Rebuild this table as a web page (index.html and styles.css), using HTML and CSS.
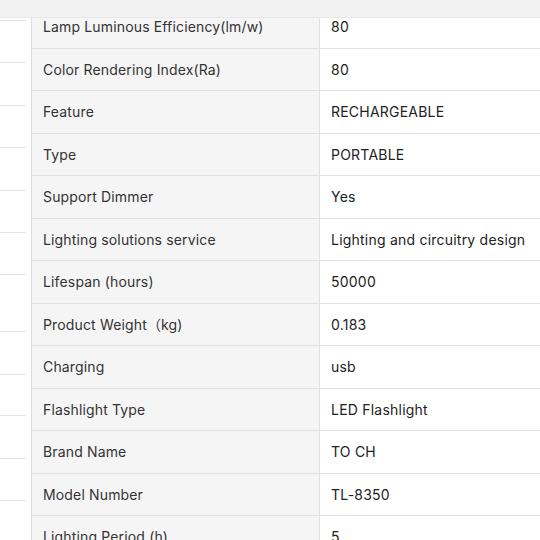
FILE: index.html
```html
<!DOCTYPE html>
<html>
<head>
<meta charset="utf-8">
<link rel="stylesheet" href="styles.css">
</head>
<body>
<div class="topbar"></div>
<div class="page">
  <div class="side">
    <div class="side-item" style="height:21px"></div>
    <div class="side-item" style="height:42px"></div>
    <div class="side-item" style="height:43px"></div>
    <div class="side-item" style="height:42px"></div>
    <div class="side-item" style="height:43px"></div>
    <div class="side-item" style="height:42px"></div>
    <div class="side-item" style="height:42px"></div>
    <div class="side-item" style="height:57px"></div>
    <div class="side-item" style="height:43px"></div>
    <div class="side-item" style="height:41px"></div>
    <div class="side-item" style="height:43px"></div>
    <div class="side-item" style="height:42px"></div>
    <div class="side-item" style="height:42px"></div>
  </div>
  <div class="specs">
    <div class="row"><div class="label">Lamp Luminous Efficiency(lm/w)</div><div class="value">80</div></div>
    <div class="row"><div class="label">Color Rendering Index(Ra)</div><div class="value">80</div></div>
    <div class="row"><div class="label">Feature</div><div class="value">RECHARGEABLE</div></div>
    <div class="row"><div class="label">Type</div><div class="value">PORTABLE</div></div>
    <div class="row"><div class="label">Support Dimmer</div><div class="value">Yes</div></div>
    <div class="row"><div class="label">Lighting solutions service</div><div class="value">Lighting and circuitry design</div></div>
    <div class="row"><div class="label">Lifespan (hours)</div><div class="value">50000</div></div>
    <div class="row"><div class="label">Product Weight（kg)</div><div class="value">0.183</div></div>
    <div class="row"><div class="label">Charging</div><div class="value">usb</div></div>
    <div class="row"><div class="label">Flashlight Type</div><div class="value">LED Flashlight</div></div>
    <div class="row"><div class="label">Brand Name</div><div class="value">TO CH</div></div>
    <div class="row"><div class="label">Model Number</div><div class="value">TL-8350</div></div>
    <div class="row"><div class="label">Lighting Period (h)</div><div class="value">5</div></div>
  </div>
</div>
</body>
</html>
```

FILE: styles.css
```css
html, body {
  margin: 0;
  padding: 0;
  background: #ffffff;
  overflow: hidden;
}
body {
  font-family: Inter, "Noto Sans", "Noto Sans CJK SC", sans-serif;
  font-size: 14px;
  color: #333333;
}
.topbar {
  position: fixed;
  top: 0;
  left: 0;
  right: 0;
  height: 17px;
  background: #f2f2f2;
  border-bottom: 1px solid #e8e8e8;
  z-index: 10;
}
.page {
  display: flex;
  gap: 5px;
  height: 540px;
}
.side {
  width: 26px;
  flex: none;
  display: flex;
  flex-direction: column;
}
.side-item {
  box-sizing: border-box;
  border-bottom: 1px solid #e3e3e3;
  flex: none;
}
.specs {
  flex: 1;
  border-left: 1px solid #dcdcdc;
  padding-top: 6px;
  display: flex;
  flex-direction: column;
}
.row {
  display: grid;
  grid-template-columns: 288px 1fr;
  height: 42.5px;
  box-sizing: border-box;
  border-bottom: 1px solid #e0e0e0;
  flex: none;
}
.label {
  background: #f5f5f5;
  border-right: 1px solid #e0e0e0;
  padding-left: 11px;
  display: flex;
  align-items: center;
  color: #333333;
  letter-spacing: 0.15px;
}
.value {
  padding-left: 11px;
  display: flex;
  align-items: center;
  color: #222222;
  letter-spacing: 0.22px;
}
```
